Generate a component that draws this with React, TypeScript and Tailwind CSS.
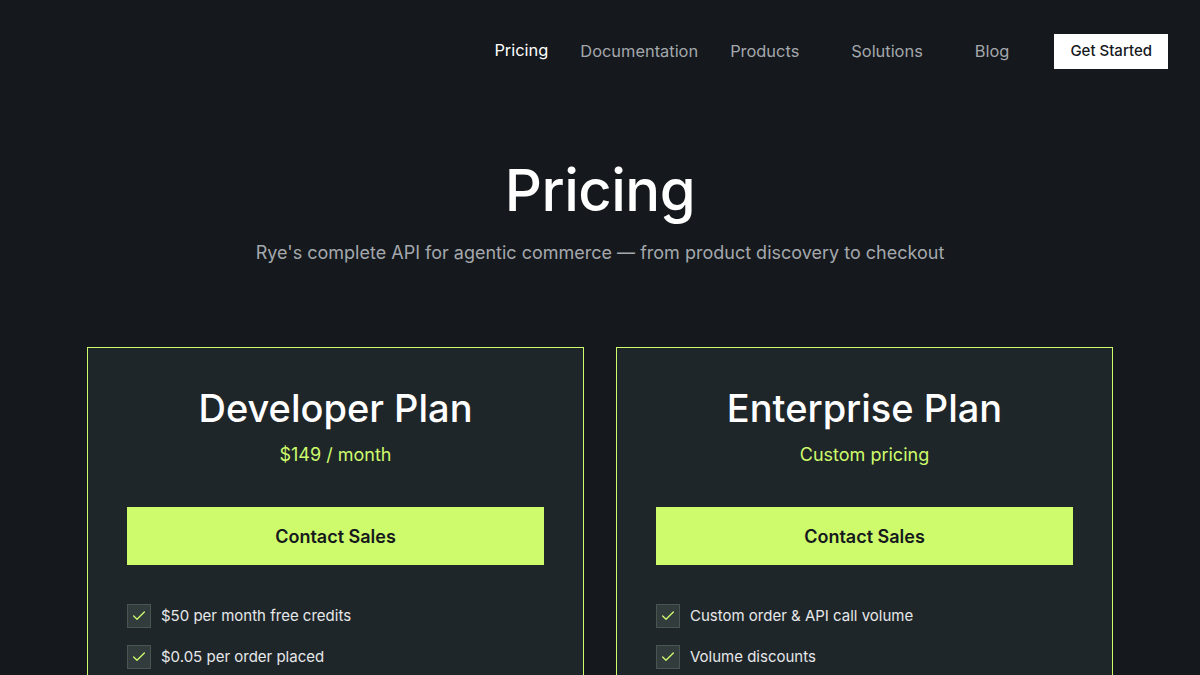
import { Check } from "lucide-react";

type Plan = {
  name: string;
  price: string;
  features: string[];
};

const plans: Plan[] = [
  {
    name: "Developer Plan",
    price: "$149 / month",
    features: ["$50 per month free credits", "$0.05 per order placed", "Standard API access"],
  },
  {
    name: "Enterprise Plan",
    price: "Custom pricing",
    features: ["Custom order & API call volume", "Volume discounts", "Dedicated support"],
  },
];

function NavBar() {
  return (
    <header className="flex h-[103px] items-center justify-end pr-8">
      <nav className="flex items-center text-[16.4px] text-[#a4a8ad]">
        <a className="mb-[2px] text-white">Pricing</a>
        <a className="ml-[32px]">Documentation</a>
        <a className="ml-[32px]">Products</a>
        <a className="ml-[52px]">Solutions</a>
        <a className="ml-[52px]">Blog</a>
        <a className="ml-[45px] flex h-[35px] items-center bg-white px-4 text-[15px] font-medium text-[#15181c]">
          Get Started
        </a>
      </nav>
    </header>
  );
}

function PlanCard({ plan }: { plan: Plan }) {
  return (
    <div className="flex flex-col border border-[#cdfb6c] bg-[#1f2629] px-[39px] pt-[36px] pb-10">
      <h2 className="text-center text-[38px] leading-[48px] font-medium text-white">{plan.name}</h2>
      <p className="mt-[11px] text-center text-[18px] leading-6 text-[#cdfb6c]">{plan.price}</p>
      <button className="mt-[40px] h-[58px] bg-[#cdfb6c] text-[18px] font-semibold text-[#15181c]">
        Contact Sales
      </button>
      <ul className="mt-[39px] flex flex-col gap-[17px]">
        {plan.features.map((f) => (
          <li key={f} className="flex items-center gap-[10px] text-[15px] text-[#e6e8e9]">
            <span className="flex h-6 w-6 items-center justify-center border border-[#4a5450] bg-[#333c3d]">
              <Check size={16} strokeWidth={2} className="text-[#cdfb6c]" />
            </span>
            {f}
          </li>
        ))}
      </ul>
    </div>
  );
}

export default function App() {
  return (
    <div
      className="min-h-screen bg-[#15181c]"
      style={{ fontFamily: "Inter, 'Noto Sans', sans-serif" }}
    >
      <NavBar />
      <section className="flex flex-col items-center">
        <h1 className="mt-[51px] text-[58px] leading-[72px] font-medium tracking-[-0.5px] text-white">Pricing</h1>
        <p className="mt-[13px] text-[18px] text-[#a4a8ad]">
          Rye's complete API for agentic commerce — from product discovery to checkout
        </p>
      </section>
      <div className="mx-auto mt-[81px] grid w-[1026px] grid-cols-2 gap-[32px]">
        {plans.map((p) => (
          <PlanCard key={p.name} plan={p} />
        ))}
      </div>
    </div>
  );
}
